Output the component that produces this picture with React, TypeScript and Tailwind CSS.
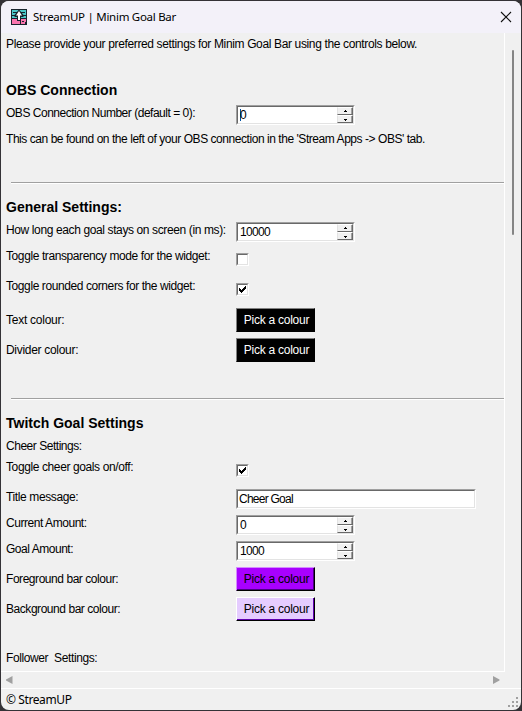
import type { ReactNode } from "react";

function Label({ children, className = "" }: { children: ReactNode; className?: string }) {
  return <span className={`whitespace-pre text-[12px] leading-[16px] ${className}`}>{children}</span>;
}

function Row({ label, spacing, className = "", labelClass = "", children }: { label: string; spacing: string; className?: string; labelClass?: string; children?: ReactNode }) {
  return (
    <div className={`flex shrink-0 items-start ${className}`}>
      <div className={`flex w-[230px] shrink-0 ${labelClass}`}>
        <Label className={spacing}>{label}</Label>
      </div>
      {children}
    </div>
  );
}

function Sunken({ children, className = "" }: { children: ReactNode; className?: string }) {
  return (
    <div className={`border border-t-[#a0a0a0] border-l-[#a0a0a0] border-r-white border-b-white ${className}`}>
      <div className="flex h-full w-full border border-t-[#696969] border-l-[#696969] border-r-[#e3e3e3] border-b-[#e3e3e3] bg-white">
        {children}
      </div>
    </div>
  );
}

function ArrowButton({ up }: { up: boolean }) {
  return (
    <div className="flex h-2 w-4 items-center justify-center border border-t-white border-l-[#e3e3e3] border-r-[#696969] border-b-[#696969] bg-[#f0f0f0] shadow-[inset_-1px_0_0_#a0a0a0]">
      <svg width="5" height="3" viewBox="0 0 5 3" shapeRendering="crispEdges">
        {up ? <path d="M2 0h1v1h1v1H1V1h1z" /> : <path d="M1 1h3v1H3v1H2V2H1z" />}
      </svg>
    </div>
  );
}

function Spinner({ value, caret = false }: { value: string; caret?: boolean }) {
  return (
    <Sunken className="h-5 w-[119px]">
      <div className="flex grow items-center pl-[2px]">
        {caret && <span className="-mr-px h-3 w-px bg-[#0050a0]" />}
        <Label className="tracking-[-0.65px]">{value}</Label>
      </div>
      <div className="flex flex-col">
        <ArrowButton up />
        <ArrowButton up={false} />
      </div>
    </Sunken>
  );
}

function Check({ checked }: { checked: boolean }) {
  return (
    <Sunken className="mt-[5px] h-[13px] w-[13px]">
      {checked && (
        <svg width="9" height="9" viewBox="0 0 9 9" shapeRendering="crispEdges">
          <path d="M1 3h1v1h1v1h1V4h1V3h1V2h1V1h1v3H7v1H6v1H5v1H4v1H3V7H2V6H1z" />
        </svg>
      )}
    </Sunken>
  );
}

function ColourButton({ tone }: { tone: string }) {
  return (
    <button className={`flex h-6 w-[79px] items-center justify-center border pl-[2px] ${tone}`}>
      <Label className="tracking-[-0.26px]">Pick a colour</Label>
    </button>
  );
}

const blackTone = "bg-black text-white border-t-[#808080] border-l-[#808080] border-r-black border-b-black";
const purpleTone = "bg-[#a800ff] text-black border-t-[#d48aff] border-l-[#d48aff] border-r-black border-b-black shadow-[inset_-1px_-1px_0_#4b0082]";
const lilacTone = "bg-[#e5ccff] text-black border-t-white border-l-white border-r-black border-b-black shadow-[inset_-1px_-1px_0_#6000b0]";

function Heading({ children, className = "" }: { children: ReactNode; className?: string }) {
  return <h2 className={`h-5 shrink-0 whitespace-pre text-[14px] leading-5 font-bold ${className}`}>{children}</h2>;
}

function Divider({ className = "" }: { className?: string }) {
  return <div className={`ml-[5px] h-[2px] shrink-0 border-t border-b border-t-[#a0a0a0] border-b-white ${className}`} />;
}

export default function App() {
  return (
    <div className="h-[711px] w-[522px] overflow-hidden bg-[#343236] p-px font-['Liberation_Sans',Arial,sans-serif] text-black">
      <div className="flex h-[709px] w-[520px] flex-col overflow-hidden rounded-lg bg-[#f0f0f0]">
        <header className="flex h-8 shrink-0 items-center bg-[#f3f1f9] pr-[9px] pl-[10px]">
          <svg width="16" height="16" viewBox="0 0 16 16">
            <rect width="16" height="16" fill="#18242d" />
            <path d="M1 1h14v8H1z" fill="#4cc8c8" />
            <path d="M1 10h14v5H1z" fill="#fa75ae" />
            <path d="M2 3h4v1H2zM10 3h4v1h-4zM1 6h3v1H1zM12 6h3v1h-3zM9 10h1v5H9zM11 12h2v1h-2zM14 13h1v2h-1z" fill="#18242d" />
            <path d="M8 0.5L3.5 6v2H6v4h4V8h2.500V6z" fill="#18242d" />
            <path d="M8 2L5 6.500h2V11h2V6.500h2z" fill="#fff" />
          </svg>
          <span className="ml-[6px] grow font-['Noto_Sans','Open_Sans',sans-serif] text-[11.5px] leading-4 tracking-[-0.28px]">StreamUP | Minim Goal Bar</span>
          <svg width="12" height="12" viewBox="0 0 12 12" fill="none" stroke="#111" strokeWidth="1.1">
            <path d="M1 1l10 10M11 1L1 11" />
          </svg>
        </header>
        <div className="flex h-[639px] shrink-0">
          <main className="flex w-[504px] shrink-0 flex-col overflow-hidden border-r border-b border-white pt-[3px] pl-[5px]">
            <Row label="Please provide your preferred settings for Minim Goal Bar using the controls below." spacing="tracking-[-0.36px]" className="h-4" />
            <Heading className="mt-7">OBS Connection</Heading>
            <Row label="OBS Connection Number (default = 0):" spacing="tracking-[-0.48px]" className="mt-[5px] h-5">
              <Spinner value="0" caret />
            </Row>
            <Row label="This can be found on the left of your OBS connection in the 'Stream Apps -> OBS' tab." spacing="tracking-[-0.45px]" className="mt-[6px] h-4" />
            <Divider className="mt-[35px]" />
            <Heading className="mt-[13px]">General Settings:</Heading>
            <Row label="How long each goal stays on screen (in ms):" spacing="tracking-[-0.38px]" className="mt-[5px] h-5">
              <Spinner value="10000" />
            </Row>
            <Row label="Toggle transparency mode for the widget:" spacing="tracking-[-0.4px]" className="mt-[6px] h-5">
              <Check checked={false} />
            </Row>
            <Row label="Toggle rounded corners for the widget:" spacing="tracking-[-0.41px]" className="mt-[10px] h-5">
              <Check checked />
            </Row>
            <Row label="Text colour:" spacing="tracking-[-0.25px]" labelClass="pt-1" className="mt-[10px] h-6">
              <ColourButton tone={blackTone} />
            </Row>
            <Row label="Divider colour:" spacing="tracking-[-0.3px]" labelClass="pt-1" className="mt-[6px] h-6">
              <ColourButton tone={blackTone} />
            </Row>
            <Divider className="mt-9" />
            <Heading className="mt-[13px]">Twitch Goal Settings</Heading>
            <Row label="Cheer Settings:" spacing="tracking-[-0.47px]" className="mt-[5px] h-4" />
            <Row label="Toggle cheer goals on/off:" spacing="tracking-[-0.39px]" className="mt-[5px] h-5">
              <Check checked />
            </Row>
            <Row label="Title message:" spacing="tracking-[-0.38px]" className="mt-[10px] h-5">
              <Sunken className="h-5 w-[240px]">
                <div className="flex items-center pl-px"><Label className="tracking-[-0.75px]">Cheer Goal</Label></div>
              </Sunken>
            </Row>
            <Row label="Current Amount:" spacing="tracking-[-0.45px]" className="mt-[6px] h-5">
              <Spinner value="0" />
            </Row>
            <Row label="Goal Amount:" spacing="tracking-[-0.47px]" className="mt-[6px] h-5">
              <Spinner value="1000" />
            </Row>
            <Row label="Foreground bar colour:" spacing="tracking-[-0.45px]" labelClass="pt-1" className="mt-[6px] h-6">
              <ColourButton tone={purpleTone} />
            </Row>
            <Row label="Background bar colour:" spacing="tracking-[-0.45px]" labelClass="pt-1" className="mt-[6px] h-6">
              <ColourButton tone={lilacTone} />
            </Row>
            <Row label="Follower  Settings:" spacing="tracking-[-0.39px]" className="mt-[29px] h-4" />
          </main>
          <div className="flex grow pt-[17px] pl-[7px]">
            <div className="h-[185px] w-[2px] rounded bg-[#858585]" />
          </div>
        </div>
        <div className="flex h-4 shrink-0 items-center justify-between pr-[21px] pl-[5px]">
          <svg width="7" height="8" viewBox="0 0 7 8" fill="#a0a0a0"><path d="M6.500 0v8L0 4.500v-1z" /></svg>
          <svg width="7" height="8" viewBox="0 0 7 8" fill="#a0a0a0"><path d="M0 0v8l6.500-3.500v-1z" /></svg>
        </div>
        <footer className="flex grow items-start justify-between border-t border-white pr-[2px] pl-[5px]">
          <span className="mt-[3px] font-['Noto_Sans','Open_Sans',sans-serif] text-[12px] leading-4 tracking-[-0.4px]">© StreamUP</span>
          <svg className="mt-[8px]" width="11" height="11" viewBox="0 0 11 11" fill="#a0a0a0">
            <path d="M8 0h2v2H8zM4 4h2v2H4zM8 4h2v2H8zM0 8h2v2H0zM4 8h2v2H4zM8 8h2v2H8z" />
          </svg>
        </footer>
      </div>
    </div>
  );
}
